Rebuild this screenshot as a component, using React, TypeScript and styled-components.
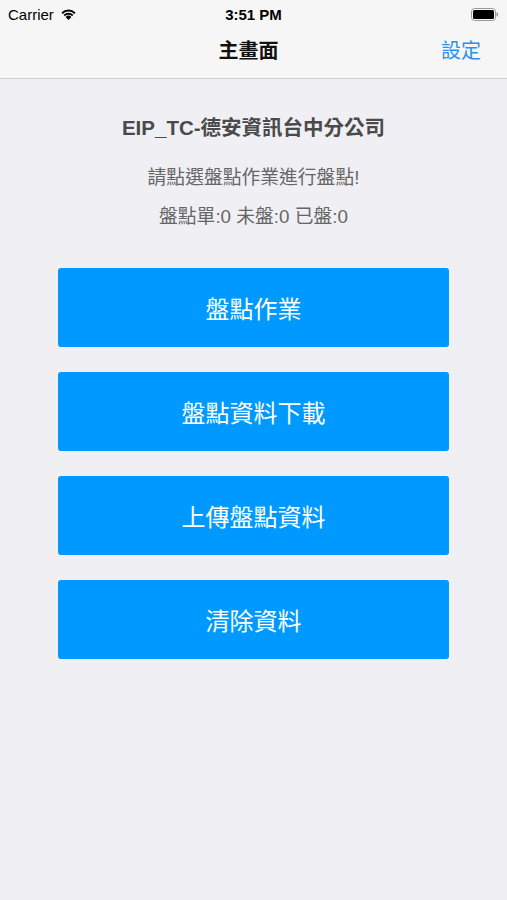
import * as React from 'react'
import styled, { createGlobalStyle } from 'styled-components'

const Global = createGlobalStyle`
  html, body {
    margin: 0;
    padding: 0;
    background: #efeff4;
  }
  body {
    font-family: "Noto Sans", "Noto Sans CJK TC", sans-serif;
  }
`

const Screen = styled.div`
  width: 507px;
  min-height: 900px;
  background: #efeff4;
  display: flex;
  flex-direction: column;
`

const Header = styled.div`
  background: #f6f6f6;
  border-bottom: 1px solid #cfcfd3;
`

const StatusBar = styled.div`
  height: 28px;
  display: grid;
  grid-template-columns: 1fr auto 1fr;
  align-items: center;
  padding: 0 8px;
  font-family: "Liberation Sans", "Noto Sans CJK TC", sans-serif;
  font-size: 15px;
  color: #000;
`

const Carrier = styled.div`
  display: flex;
  align-items: center;
  gap: 6px;
`

const Time = styled.div`
  font-weight: bold;
  text-align: center;
`

const BatteryWrap = styled.div`
  display: flex;
  justify-content: flex-end;
  align-items: center;
`

const NavBar = styled.div`
  height: 50px;
  display: grid;
  grid-template-columns: 1fr auto 1fr;
  align-items: center;
  padding: 0 26px 7px 16px;
  box-sizing: border-box;
`

const NavTitle = styled.div`
  font-family: "Noto Sans CJK TC", sans-serif;
  font-size: 20px;
  font-weight: 700;
  color: #111;
  text-align: center;
  line-height: 24px;
`

const NavAction = styled.div`
  font-family: "Noto Sans CJK TC", sans-serif;
  font-size: 20px;
  color: #2d8ff0;
  text-align: right;
  line-height: 24px;
`

const Content = styled.div`
  display: flex;
  flex-direction: column;
  align-items: center;
  padding-top: 36px;
`

const Company = styled.div`
  font-family: "Liberation Sans", "Noto Sans CJK TC", sans-serif;
  font-size: 20.5px;
  font-weight: 700;
  color: #4a4a4a;
  line-height: 26px;
`

const Info = styled.div<{ $top: number }>`
  margin-top: ${p => p.$top}px;
  font-family: "Liberation Sans", "Noto Sans CJK TC", sans-serif;
  font-size: 18.8px;
  color: #666;
  line-height: 24px;
`

const Buttons = styled.div`
  margin-top: 39px;
  display: flex;
  flex-direction: column;
  gap: 25px;
  width: 391px;
`

const ActionButton = styled.button`
  height: 79px;
  border: none;
  border-radius: 3px;
  background: #0099ff;
  color: #fff;
  font-family: "Noto Sans CJK TC", sans-serif;
  font-size: 24px;
  padding: 0;
`

const Wifi = () => (
  <svg width="17" height="12" viewBox="0 0 17 12">
    <path d="M8.5 12 L5.6 8.9 A4.2 4.2 0 0 1 11.4 8.9 Z" fill="#000" />
    <path d="M3.6 6.8 A7 7 0 0 1 13.4 6.8 L12.1 8.2 A5.2 5.2 0 0 0 4.9 8.2 Z" fill="#000" />
    <path d="M1.4 4.5 A10.2 10.2 0 0 1 15.6 4.5 L14.2 5.9 A8.2 8.2 0 0 0 2.8 5.9 Z" fill="#000" />
  </svg>
)

const Battery = () => (
  <svg width="28" height="13" viewBox="0 0 28 13">
    <rect x="0.5" y="0.5" width="24" height="12" rx="3" fill="none" stroke="#999" />
    <rect x="2" y="2" width="21" height="9" rx="1.5" fill="#000" />
    <rect x="25.5" y="4.5" width="1.5" height="4" rx="0.7" fill="#999" />
  </svg>
)

const actions = ['盤點作業', '盤點資料下載', '上傳盤點資料', '清除資料']

export default function App() {
  return (
    <Screen>
      <Global />
      <Header>
        <StatusBar>
          <Carrier>Carrier <Wifi /></Carrier>
          <Time>3:51 PM</Time>
          <BatteryWrap><Battery /></BatteryWrap>
        </StatusBar>
        <NavBar>
          <div />
          <NavTitle>主畫面</NavTitle>
          <NavAction>設定</NavAction>
        </NavBar>
      </Header>
      <Content>
        <Company>EIP_TC-德安資訊台中分公司</Company>
        <Info $top={25}>請點選盤點作業進行盤點!</Info>
        <Info $top={15}>盤點單:0 未盤:0 已盤:0</Info>
        <Buttons>
          {actions.map(a => <ActionButton key={a}>{a}</ActionButton>)}
        </Buttons>
      </Content>
    </Screen>
  )
}
